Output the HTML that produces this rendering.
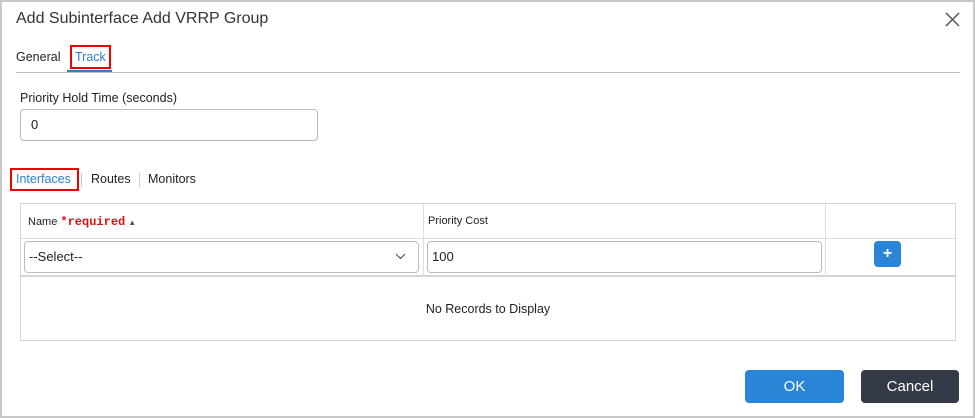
<!DOCTYPE html><html><head><style>
body{margin:0;width:975px;height:418px;background:#fff;font-family:"Liberation Sans",sans-serif;color:#222;position:relative;overflow:hidden}
.a{position:absolute}
.frame{left:0;top:0;width:971px;height:414px;border:2px solid #c8c8c8}
.inp{border:1px solid #bbb;border-radius:4px;box-sizing:border-box;font-size:13px;padding-left:10px;line-height:29px}
.btn{border-radius:4px;color:#fff;font-size:15px;text-align:center;line-height:33px}
</style></head><body>
<div class="a frame"></div>
<div class="a" style="left:16px;top:10px;font-size:16px;color:#333">Add Subinterface Add VRRP Group</div>
<svg class="a" style="left:945px;top:12px" width="15" height="15"><path d="M1 1L14 14M14 1L1 14" stroke="#555" stroke-width="1.5"/></svg>
<div class="a" style="left:16px;top:50px;font-size:12.5px">General</div>
<div class="a" style="left:70px;top:45px;width:37px;height:20px;border:2px solid #e00"></div>
<div class="a" style="left:75px;top:50px;font-size:12.5px;color:#2a7fd4">Track</div>
<div class="a" style="left:16px;top:72px;width:944px;height:1px;background:#bbb"></div>
<div class="a" style="left:67px;top:70px;width:45px;height:2px;background:#2a7fd4"></div>
<div class="a" style="left:20px;top:91px;font-size:12.5px">Priority Hold Time (seconds)</div>
<div class="a inp" style="left:20px;top:109px;width:298px;height:32px;line-height:30px">0</div>
<div class="a" style="left:10px;top:168px;width:65px;height:19px;border:2px solid #e00"></div>
<div class="a" style="left:16px;top:172px;font-size:12.5px;color:#2a7fd4">Interfaces</div>
<div class="a" style="left:81px;top:173px;width:1px;height:14px;background:#ccc"></div>
<div class="a" style="left:91px;top:172px;font-size:12.5px">Routes</div>
<div class="a" style="left:139px;top:173px;width:1px;height:14px;background:#ccc"></div>
<div class="a" style="left:148px;top:172px;font-size:12.5px">Monitors</div>
<div class="a" style="left:20px;top:203px;width:936px;height:138px;border:1px solid #d4d4d4;box-sizing:border-box"></div>
<div class="a" style="left:20px;top:238px;width:936px;height:1px;background:#ddd"></div>
<div class="a" style="left:20px;top:275px;width:936px;height:2px;background:#d4d4d4"></div>
<div class="a" style="left:423px;top:203px;width:1px;height:73px;background:#ddd"></div>
<div class="a" style="left:825px;top:203px;width:1px;height:73px;background:#ddd"></div>
<div class="a" style="left:28px;top:215px;font-size:11px">Name <b style="color:#d11;font-family:'Liberation Mono',monospace;font-size:12px">*required</b> <span style="font-size:8px;color:#555">▲</span></div>
<div class="a" style="left:428px;top:215px;font-size:11px">Priority Cost</div>
<div class="a inp" style="left:24px;top:241px;width:395px;height:32px;padding-left:4px">--Select--</div>
<svg class="a" style="left:395px;top:253px" width="11" height="7"><path d="M1 1L5.5 5.5L10 1" stroke="#444" fill="none"/></svg>
<div class="a inp" style="left:427px;top:241px;width:395px;height:32px;padding-left:4px">100</div>
<div class="a btn" style="left:874px;top:241px;width:27px;height:26px;background:#2a85d6;line-height:26px;font-size:16px;font-weight:bold">+</div>
<div class="a" style="left:20px;top:302px;width:936px;text-align:center;font-size:12.5px">No Records to Display</div>
<div class="a btn" style="left:745px;top:370px;width:99px;height:33px;background:#2a85d6">OK</div>
<div class="a btn" style="left:861px;top:370px;width:98px;height:33px;background:#353a48">Cancel</div>
</body></html>
